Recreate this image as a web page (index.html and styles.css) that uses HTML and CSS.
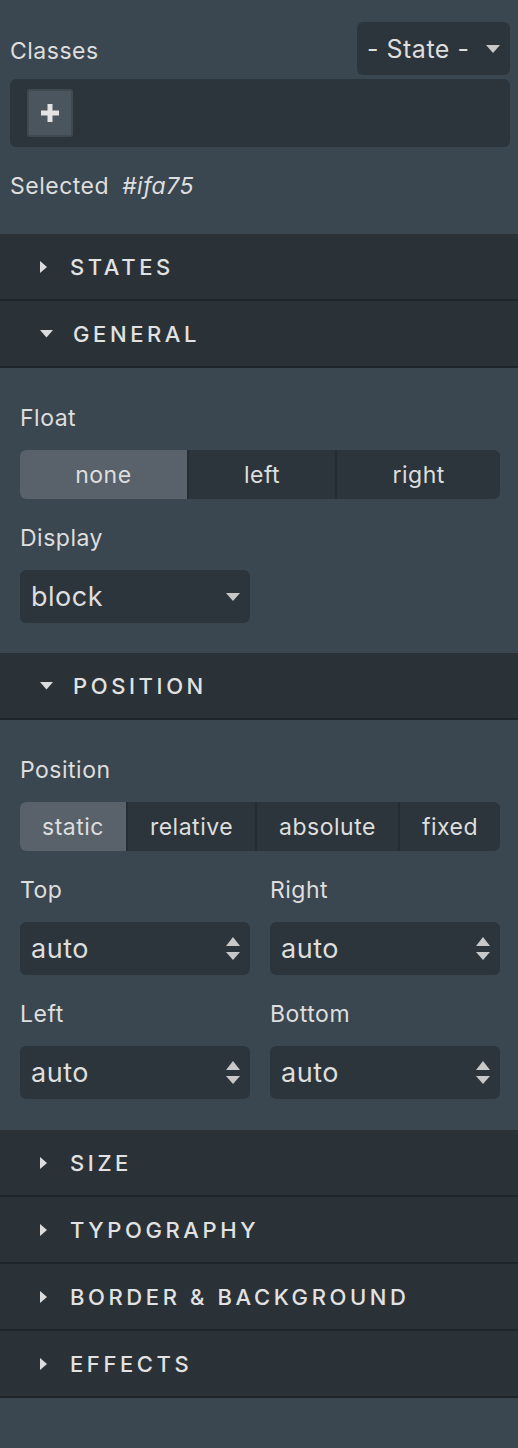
FILE: index.html
```html
<!DOCTYPE html>
<html>
<head>
<meta charset="utf-8">
<link rel="stylesheet" href="styles.css">
</head>
<body>
<div class="panel">
  <div class="classes">
    <div class="classes-head">
      <span class="classes-label">Classes</span>
      <div class="state-select">
        <span>- State -</span>
        <svg class="caret" width="14" height="8" viewBox="0 0 14 8"><path d="M0 0H14L7 8Z" fill="#c8c8c8"/></svg>
      </div>
    </div>
    <div class="tags">
      <div class="add-tag">
        <svg width="20" height="20" viewBox="0 0 20 20"><path d="M7.5 1H12.5V7.5H19V12.5H12.5V19H7.5V12.5H1V7.5H7.5Z" fill="#e2e2e2"/></svg>
      </div>
    </div>
    <div class="selected">Selected <em>#ifa75</em></div>
  </div>

  <div class="sector">
    <div class="sector-head"><svg class="arrow-r" width="8" height="12" viewBox="0 0 8 12"><path d="M0 0L7 6L0 12Z" fill="#dcdcdc"/></svg><span class="title">STATES</span></div>
  </div>

  <div class="sector">
    <div class="sector-head"><svg class="arrow-d" width="13" height="8" viewBox="0 0 13 8"><path d="M0 0H13L6.5 7.5Z" fill="#dcdcdc"/></svg><span class="title">GENERAL</span></div>
    <div class="sector-body">
      <div class="prop">
        <div class="label">Float</div>
        <div class="radio">
          <span class="opt on">none</span><span class="opt">left</span><span class="opt">right</span>
        </div>
      </div>
      <div class="prop">
        <div class="label">Display</div>
        <div class="field half">
          <span class="val">block</span>
          <svg class="sel-caret" width="14" height="8" viewBox="0 0 14 8"><path d="M0 0H14L7 8Z" fill="#c8c8c8"/></svg>
        </div>
      </div>
    </div>
  </div>

  <div class="sector">
    <div class="sector-head"><svg class="arrow-d" width="13" height="8" viewBox="0 0 13 8"><path d="M0 0H13L6.5 7.5Z" fill="#dcdcdc"/></svg><span class="title">POSITION</span></div>
    <div class="sector-body last">
      <div class="prop">
        <div class="label">Position</div>
        <div class="radio">
          <span class="opt on">static</span><span class="opt">relative</span><span class="opt">absolute</span><span class="opt">fixed</span>
        </div>
      </div>
      <div class="grid">
        <div class="prop">
          <div class="label">Top</div>
          <div class="field num"><span class="val">auto</span><svg class="spin" width="14" height="24" viewBox="0 0 14 24"><path d="M7 0L14 9H0Z M0 15H14L7 23Z" fill="#c8c8c8"/></svg></div>
        </div>
        <div class="prop">
          <div class="label">Right</div>
          <div class="field num"><span class="val">auto</span><svg class="spin" width="14" height="24" viewBox="0 0 14 24"><path d="M7 0L14 9H0Z M0 15H14L7 23Z" fill="#c8c8c8"/></svg></div>
        </div>
        <div class="prop">
          <div class="label">Left</div>
          <div class="field num"><span class="val">auto</span><svg class="spin" width="14" height="24" viewBox="0 0 14 24"><path d="M7 0L14 9H0Z M0 15H14L7 23Z" fill="#c8c8c8"/></svg></div>
        </div>
        <div class="prop">
          <div class="label">Bottom</div>
          <div class="field num"><span class="val">auto</span><svg class="spin" width="14" height="24" viewBox="0 0 14 24"><path d="M7 0L14 9H0Z M0 15H14L7 23Z" fill="#c8c8c8"/></svg></div>
        </div>
      </div>
    </div>
  </div>

  <div class="sector">
    <div class="sector-head"><svg class="arrow-r" width="8" height="12" viewBox="0 0 8 12"><path d="M0 0L7 6L0 12Z" fill="#dcdcdc"/></svg><span class="title">SIZE</span></div>
  </div>
  <div class="sector">
    <div class="sector-head"><svg class="arrow-r" width="8" height="12" viewBox="0 0 8 12"><path d="M0 0L7 6L0 12Z" fill="#dcdcdc"/></svg><span class="title">TYPOGRAPHY</span></div>
  </div>
  <div class="sector">
    <div class="sector-head"><svg class="arrow-r" width="8" height="12" viewBox="0 0 8 12"><path d="M0 0L7 6L0 12Z" fill="#dcdcdc"/></svg><span class="title">BORDER &amp; BACKGROUND</span></div>
  </div>
  <div class="sector">
    <div class="sector-head"><svg class="arrow-r" width="8" height="12" viewBox="0 0 8 12"><path d="M0 0L7 6L0 12Z" fill="#dcdcdc"/></svg><span class="title">EFFECTS</span></div>
  </div>
</div>
</body>
</html>
```

FILE: styles.css
```css
html, body {
  margin: 0;
  padding: 0;
  background: #3b4750;
}
body {
  font-family: "Inter", "DejaVu Sans", sans-serif;
  color: #dedede;
  min-height: 1448px;
  letter-spacing: 0.5px;
}
.panel {
  width: 518px;
}
.classes {
  padding: 22px 8px 0 10px;
  height: 212px;
}
.classes-head {
  display: flex;
  justify-content: space-between;
  align-items: center;
}
.classes-label {
  font-size: 23px;
  padding-top: 4px;
}
.state-select {
  width: 153px;
  height: 53px;
  box-sizing: border-box;
  background: #2c353b;
  border-radius: 6px;
  display: flex;
  align-items: center;
  padding: 0 10px 0 10px;
  justify-content: space-between;
  font-size: 25px;
}
.tags {
  margin-top: 4px;
  height: 68px;
  background: #2c353b;
  border-radius: 6px;
  padding: 10px 0 0 17px;
  box-sizing: border-box;
}
.add-tag {
  width: 46px;
  height: 48px;
  box-sizing: border-box;
  background: #4b555d;
  border: 2px solid #3f4950;
  border-radius: 3px;
  display: flex;
  align-items: center;
  justify-content: center;
}
.selected {
  margin-top: 25px;
  font-size: 23px;
}
.selected em {
  margin-left: 6px;
}
.sector-head {
  height: 65px;
  background: #2b3237;
  border-bottom: 2px solid #1f2428;
  display: flex;
  align-items: center;
  padding-left: 40px;
}
.sector-head .title {
  font-size: 22px;
  font-weight: 500;
  letter-spacing: 3.6px;
  color: #e2e2e2;
}
.arrow-r {
  margin-right: 22px;
}
.arrow-d {
  margin-right: 20px;
}
.sector-body {
  padding: 35px 18px 30px 20px;
}
.sector-body.last {
  padding-bottom: 31px;
}
.prop + .prop {
  margin-top: 24px;
}
.label {
  font-size: 23px;
  line-height: 30px;
  margin-bottom: 17px;
}
.radio {
  display: flex;
  height: 49px;
  background: #2c353b;
  border-radius: 6px;
  overflow: hidden;
}
.opt {
  flex: 1 1 auto;
  display: flex;
  align-items: center;
  justify-content: center;
  font-size: 23px;
  padding: 0 6px;
}
.opt + .opt {
  border-left: 2px solid #262d32;
}
.opt.on {
  background: #59626a;
}
.field {
  height: 53px;
  box-sizing: border-box;
  background: #2c353b;
  border-radius: 6px;
  display: flex;
  align-items: center;
  justify-content: space-between;
  padding: 0 10px 0 11px;
}
.half {
  width: 230px;
}
.field .val {
  font-size: 27px;
}
.grid {
  display: grid;
  grid-template-columns: 230px 230px;
  column-gap: 20px;
  row-gap: 24px;
  margin-top: 24px;
}
.grid .prop + .prop {
  margin-top: 0;
}
```
